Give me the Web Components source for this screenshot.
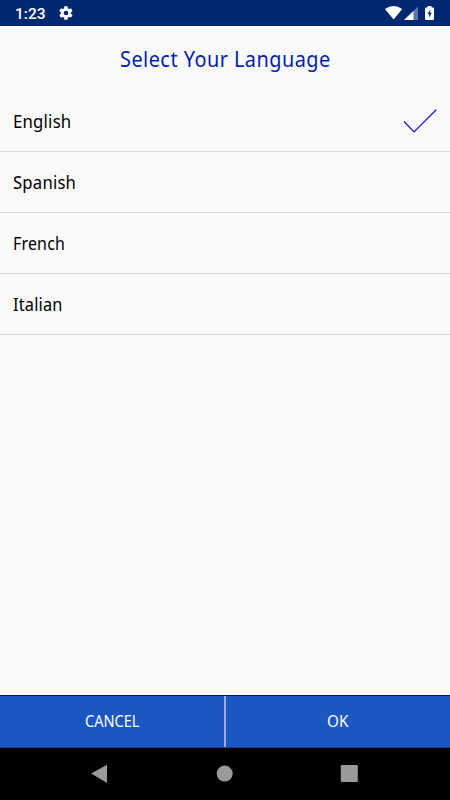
<!DOCTYPE html>
<html lang="en"><head><meta charset="utf-8"><title>Select Your Language</title>
<style>html,body{margin:0;height:100%;background:#fafafa;overflow:hidden}</style></head>
<body><language-screen></language-screen>
<script>
function define(name, html) {
  const t = document.createElement('template');
  t.innerHTML = html;
  customElements.define(name, class extends HTMLElement {
    constructor() { super(); this.attachShadow({mode:'open'}).append(t.content.cloneNode(true)); }
  });
}
// A label condensed or widened to the width in its "width" attribute.
class FitText extends HTMLElement {
  constructor() {
    super();
    this.attachShadow({mode:'open'}).innerHTML = `<style>:host{display:block;white-space:nowrap}span{display:inline-block;transform-origin:0 50%}</style><span><slot></slot></span>`;
  }
  fit() {
    const w = +this.getAttribute('width'), s = this.shadowRoot.querySelector('span');
    this.style.width = w + 'px';
    const natural = s.offsetWidth;
    if (natural) s.style.transform = `scaleX(${w / natural})`;
  }
}
customElements.define('fit-text', FitText);
define('status-bar', `<style>
:host{display:flex;box-sizing:border-box;height:26px;background:#002871;color:#fff;padding:0 15px 0 15px;align-items:center;font:500 15.500px/26px Roboto,sans-serif;border-bottom:1px solid #001e65}
span{width:42.500px;padding-top:2px;white-space:nowrap}svg{display:block}.r{margin-left:auto}
</style><span>1:23</span>
<svg width="16" height="16" viewBox="0 0 24 24" fill="#fff"><path d="M19.400 13c0-.3.1-.6.1-1s0-.7-.1-1l2.100-1.600c.2-.2.2-.4.100-.6l-2-3.500c-.1-.2-.4-.3-.6-.2l-2.500 1c-.5-.4-1.100-.7-1.700-1l-.4-2.600c0-.3-.2-.5-.5-.5h-4c-.3 0-.5.2-.5.500L9 5.100c-.6.3-1.200.6-1.700 1l-2.500-1c-.2-.1-.5 0-.6.200l-2 3.500c-.1.2-.1.500.1.600L4.400 11c0 .3-.1.700-.1 1s0 .7.100 1l-2.100 1.600c-.2.2-.2.400-.1.600l2 3.500c.1.200.4.300.6.200l2.500-1c.5.400 1.100.7 1.700 1l.4 2.600c0 .3.300.500.500.500h4c.3 0 .5-.2.500-.5l.4-2.600c.6-.3 1.200-.6 1.700-1l2.500 1c.2.100.5 0 .6-.2l2-3.500c.1-.2.1-.5-.1-.6zM12 15.500a3.500 3.500 0 1 1 0-7 3.500 3.500 0 0 1 0 7z"/></svg>
<svg class="r" width="50" height="26" viewBox="0 0 50 26"><path d="M0 9Q8.500 2.800 17.200 9L8.600 19.500z" fill="#fff"/><path d="M33 6.500v13.500H19z" fill="#5775a8"/><path d="M28.500 11V20H19z" fill="#fff"/><path d="M42.500 6h4v1.500h1.500q1 0 1 1V19q0 1-1 1h-7q-1 0-1-1V8.500q0-1 1-1h1.500z" fill="#fff"/><path d="M45.500 9.500L42.500 14h1.700v3.800l2.600-5h-1.800z" fill="#002871"/></svg>`);
define('page-title', `<style>:host{display:flex;height:65px;box-sizing:border-box;justify-content:center;align-items:center;padding-bottom:1px;color:#061eaa;font-size:22px;letter-spacing:.5px}</style><slot></slot>`);
define('language-row', `<style>:host{display:flex;box-sizing:border-box;height:61px;padding:0 13px 1px 12.500px;align-items:center;border-bottom:1px solid #d6d6d6;color:#000;font-size:17.500px;letter-spacing:.2px}
slot[name=mark]{display:block;margin-left:auto}</style><slot></slot><slot name="mark"></slot>`);
define('check-mark', `<style>:host{display:block;padding-top:2px}svg{display:block}</style><svg width="34" height="26" viewBox="0 0 34 26"><path d="M1 12.500L11 22.900 33.200 .8" fill="none" stroke="#1018c8" stroke-width="1.250"/></svg>`);
define('action-button', `<style>:host{display:flex;flex:1;justify-content:center;align-items:center;box-sizing:border-box;padding-bottom:2px;color:#fff;font-size:16.300px}</style><slot></slot>`);
define('action-bar', `<style>:host{display:flex;box-sizing:border-box;height:53px;background:#1a57c2;border-top:1px solid #0008b5;border-bottom:1px solid #163f91}
i{width:2px;background:#a2aad5}</style><slot name="left"></slot><i></i><slot name="right"></slot>`);
define('navigation-bar', `<style>:host{display:block;height:52px;background:#000}svg{display:block}</style><svg width="450" height="52" viewBox="0 0 450 52" fill="#9a9a9a"><path d="M91.200 25.500L107 16.700v18.200z"/><circle cx="224.700" cy="25.600" r="8"/><rect x="340.800" y="17" width="17" height="17" rx="1.200"/></svg>`);
define('language-screen', `<style>:host{display:flex;flex-direction:column;width:450px;height:800px;background:#fafafa;font-family:"Noto Sans",sans-serif}main{flex:1}</style>
<status-bar></status-bar><main><page-title><fit-text width="211">Select Your Language</fit-text></page-title>
<language-row><fit-text width="58.500">English</fit-text><check-mark slot="mark"></check-mark></language-row><language-row><fit-text width="63">Spanish</fit-text></language-row><language-row><fit-text width="52">French</fit-text></language-row><language-row><fit-text width="49.500">Italian</fit-text></language-row></main>
<action-bar><action-button slot="left"><fit-text width="54.500">CANCEL</fit-text></action-button><action-button slot="right"><fit-text width="21.500">OK</fit-text></action-button></action-bar><navigation-bar></navigation-bar>`);
document.querySelector('language-screen').shadowRoot.querySelectorAll('fit-text').forEach(e => e.fit());
</script></body></html>
